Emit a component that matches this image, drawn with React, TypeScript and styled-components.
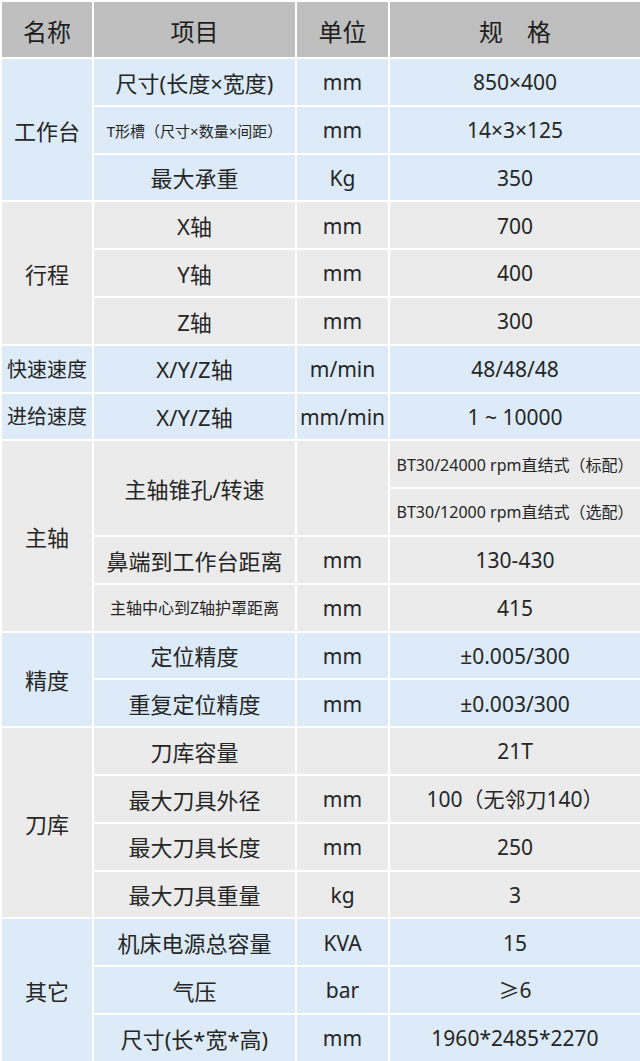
import React from 'react';
import styled, { createGlobalStyle } from 'styled-components';

const GlobalStyle = createGlobalStyle`
  html, body {
    margin: 0;
    padding: 0;
    background: #ffffff;
  }
  body {
    font-family: "Noto Sans", "Noto Sans CJK SC", sans-serif;
    color: #222222;
  }
`;

const tones = {
  head: '#bfbfbf',
  blue: '#dcebf7',
  gray: '#ebebeb',
};

type Tone = 'blue' | 'gray';

const Table = styled.table`
  width: 640px;
  table-layout: fixed;
  border-collapse: collapse;
  font-family: "Noto Sans", "Noto Sans CJK SC", sans-serif;
`;

const HeadRow = styled.tr`
  height: 57px;
`;

const HeadCell = styled.th`
  background: ${tones.head};
  border: 2px solid #ffffff;
  font-size: 24px;
  font-weight: 400;
  color: #1e1e1e;
  text-align: center;
  padding: 2px 0 0;
  white-space: pre;
`;

const BodyRow = styled.tr`
  height: 47.8px;
`;

const Cell = styled.td<{ tone: Tone; size?: number }>`
  background: ${({ tone }) => tones[tone]};
  border: 2px solid #ffffff;
  font-size: ${({ size }) => size ?? 21}px;
  font-weight: 400;
  color: #262626;
  text-align: center;
  vertical-align: middle;
  padding: 2px 0 0;
  white-space: nowrap;
  line-height: 1.2;
`;

type Row = {
  item: string;
  unit: string;
  spec: string;
  itemSize?: number;
  specSize?: number;
  sub?: string;
};

type Group = {
  name: string;
  nameSize?: number;
  tone: Tone;
  rows: Row[];
};

const groups: Group[] = [
  {
    name: '工作台',
    nameSize: 22,
    tone: 'blue',
    rows: [
      { item: '尺寸(长度×宽度)', unit: 'mm', spec: '850×400' },
      { item: 'T形槽（尺寸×数量×间距）', itemSize: 15, unit: 'mm', spec: '14×3×125' },
      { item: '最大承重', unit: 'Kg', spec: '350' },
    ],
  },
  {
    name: '行程',
    nameSize: 22,
    tone: 'gray',
    rows: [
      { item: 'X轴', unit: 'mm', spec: '700' },
      { item: 'Y轴', unit: 'mm', spec: '400' },
      { item: 'Z轴', unit: 'mm', spec: '300' },
    ],
  },
  {
    name: '快速速度',
    nameSize: 20,
    tone: 'blue',
    rows: [{ item: 'X/Y/Z轴', unit: 'm/min', spec: '48/48/48' }],
  },
  {
    name: '进给速度',
    nameSize: 20,
    tone: 'blue',
    rows: [{ item: 'X/Y/Z轴', unit: 'mm/min', spec: '1 ~ 10000' }],
  },
  {
    name: '主轴',
    nameSize: 22,
    tone: 'gray',
    rows: [
      {
        item: '主轴锥孔/转速',
        unit: '',
        spec: 'BT30/24000 rpm直结式（标配）',
        sub: 'BT30/12000 rpm直结式（选配）',
        specSize: 16,
      },
      { item: '鼻端到工作台距离', unit: 'mm', spec: '130-430' },
      { item: '主轴中心到Z轴护罩距离', itemSize: 16, unit: 'mm', spec: '415' },
    ],
  },
  {
    name: '精度',
    nameSize: 22,
    tone: 'blue',
    rows: [
      { item: '定位精度', unit: 'mm', spec: '±0.005/300' },
      { item: '重复定位精度', unit: 'mm', spec: '±0.003/300' },
    ],
  },
  {
    name: '刀库',
    nameSize: 22,
    tone: 'gray',
    rows: [
      { item: '刀库容量', unit: '', spec: '21T' },
      { item: '最大刀具外径', unit: 'mm', spec: '100（无邻刀140）' },
      { item: '最大刀具长度', unit: 'mm', spec: '250' },
      { item: '最大刀具重量', unit: 'kg', spec: '3' },
    ],
  },
  {
    name: '其它',
    nameSize: 22,
    tone: 'blue',
    rows: [
      { item: '机床电源总容量', unit: 'KVA', spec: '15' },
      { item: '气压', unit: 'bar', spec: '≥6' },
      { item: '尺寸(长*宽*高)', unit: 'mm', spec: '1960*2485*2270' },
    ],
  },
];

function GroupRows({ group }: { group: Group }) {
  const span = group.rows.reduce((n, r) => n + (r.sub ? 2 : 1), 0);
  const out: React.ReactNode[] = [];

  group.rows.forEach((row, i) => {
    const rs = row.sub ? 2 : 1;
    out.push(
      <BodyRow key={`${group.name}-${i}`}>
        {i === 0 && (
          <Cell tone={group.tone} size={group.nameSize} rowSpan={span}>
            {group.name}
          </Cell>
        )}
        <Cell tone={group.tone} size={row.itemSize ?? 22} rowSpan={rs}>
          {row.item}
        </Cell>
        <Cell tone={group.tone} rowSpan={rs}>
          {row.unit}
        </Cell>
        <Cell tone={group.tone} size={row.specSize}>
          {row.spec}
        </Cell>
      </BodyRow>
    );
    if (row.sub) {
      out.push(
        <BodyRow key={`${group.name}-${i}-sub`}>
          <Cell tone={group.tone} size={row.specSize}>
            {row.sub}
          </Cell>
        </BodyRow>
      );
    }
  });

  return <>{out}</>;
}

export default function App() {
  return (
    <>
      <GlobalStyle />
      <Table>
        <colgroup>
          <col style={{ width: 92 }} />
          <col style={{ width: 203 }} />
          <col style={{ width: 93 }} />
          <col style={{ width: 252 }} />
        </colgroup>
        <thead>
          <HeadRow>
            <HeadCell>名称</HeadCell>
            <HeadCell>项目</HeadCell>
            <HeadCell>单位</HeadCell>
            <HeadCell>{'规　格'}</HeadCell>
          </HeadRow>
        </thead>
        <tbody>
          {groups.map((g) => (
            <GroupRows key={g.name} group={g} />
          ))}
        </tbody>
      </Table>
    </>
  );
}
